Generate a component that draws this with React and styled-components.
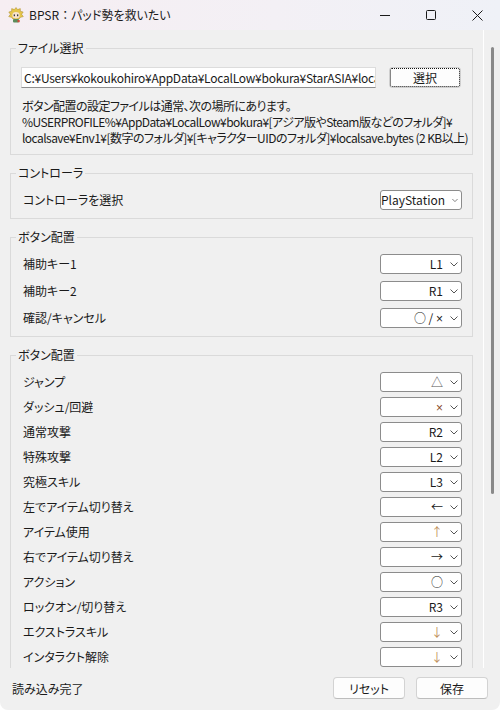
import React from "react";
import styled, { createGlobalStyle } from "styled-components";

const GlobalStyle = createGlobalStyle`
  html, body { margin: 0; padding: 0; background: #ffffff; }
  body {
    font-family: "Noto Sans CJK JP", "Noto Sans", sans-serif;
    font-size: 12px;
    color: #1a1a1a;
  }
  * { box-sizing: border-box; }
`;

const Window = styled.div`
  width: 500px;
  height: 710px;
  display: flex;
  flex-direction: column;
  background: #f0f0f0;
  border-radius: 0 0 8px 8px;
  overflow: hidden;
  font-feature-settings: "palt";
`;

const TitleBar = styled.div`
  height: 30px;
  flex: none;
  display: flex;
  align-items: center;
  background: linear-gradient(90deg, #f6eef2 0%, #f3f0f5 55%, #eff1f7 100%);
`;

const AppIcon = styled.svg`
  width: 16px;
  height: 16px;
  margin-left: 8px;
  flex: none;
`;

const TitleText = styled.div`
  margin-left: 5px;
  flex: 1;
  font-size: 12px;
  line-height: 16px;
  color: #1a1a1a;
`;

const FullWidth = styled.span`
  font-feature-settings: normal;
`;

const WinControls = styled.div`
  display: flex;
  height: 100%;
`;

const WinButton = styled.div`
  width: 46px;
  height: 30px;
  display: flex;
  align-items: center;
  justify-content: center;
`;

const Main = styled.div`
  height: 638px;
  flex: none;
  display: flex;
`;

const Content = styled.div`
  width: 483px;
  flex: none;
  overflow: hidden;
  padding: 18px 10px 0 10px;
  display: flex;
  flex-direction: column;
  gap: 18px;
`;

const ScrollTrack = styled.div`
  width: 17px;
  flex: none;
  border-left: 1px solid #ffffff;
  padding: 17px 0 0 7px;
`;

const ScrollThumb = styled.div`
  width: 3px;
  height: 447px;
  border-radius: 2px;
  background: #8a8a8a;
`;

const Group = styled.section`
  position: relative;
  flex: none;
  border: 1px solid #dadada;
  padding: ${(p) => p.$pt}px 10px 8px 10px;
`;

const Legend = styled.div`
  position: absolute;
  top: -8px;
  left: 5px;
  padding: 0 2px;
  background: #f0f0f0;
  font-size: 12px;
  line-height: 14px;
  color: #1a1a1a;
`;

const FileRow = styled.div`
  display: flex;
  align-items: center;
  gap: 13px;
  height: 21px;
`;

const TextBox = styled.div`
  width: 355px;
  height: 21px;
  background: #ffffff;
  border: 1px solid #dcdcdc;
  border-bottom-color: #8f8f8f;
  padding: 0 0 0 2px;
  overflow: hidden;
  white-space: nowrap;
  text-overflow: clip;
  line-height: 19px;
  font-size: 12px;
  letter-spacing: -0.25px;
`;

const SelectButton = styled.div`
  width: 72px;
  height: 21px;
  flex: none;
  border: 1px solid #cfcfcf;
  border-radius: 3px;
  background: #fdfdfd;
  outline: 1px dotted #111;
  outline-offset: -2px;
  display: flex;
  align-items: center;
  justify-content: center;
  font-size: 12px;
`;

const Description = styled.div`
  margin-top: 10px;
  padding-left: 1px;
  line-height: 16px;
  white-space: nowrap;
  font-size: 12px;
  letter-spacing: -0.55px;
`;

const Rows = styled.div`
  display: flex;
  flex-direction: column;
  gap: ${(p) => p.$gap}px;
`;

const Row = styled.div`
  display: flex;
  align-items: center;
  justify-content: space-between;
  height: 20px;
`;

const Label = styled.div`
  padding-left: 2px;
  font-size: 12px;
  line-height: 16px;
`;

const Combo = styled.div`
  width: 82px;
  height: 20px;
  border: 1px solid #8c8c8c;
  border-radius: 3px;
  background: #ffffff;
  display: flex;
  align-items: center;
  justify-content: flex-end;
  gap: 7px;
  padding-right: 3px;
`;

const ComboValue = styled.span`
  font-size: 12px;
  line-height: 16px;
  color: ${(p) => p.$color || "#1a1a1a"};
  white-space: nowrap;
`;

const SmallCross = styled.span`
  font-family: "Liberation Sans", "DejaVu Sans", sans-serif;
  font-size: 12px;
  color: ${(p) => p.$color || "#1a1a1a"};
`;

const StatusBar = styled.div`
  flex: 1;
  display: flex;
  align-items: center;
  gap: 11px;
  padding: 0 12px 2px 12px;
`;

const StatusText = styled.div`
  flex: 1;
  font-size: 12px;
`;

const PushButton = styled.button`
  width: 72px;
  height: 22px;
  padding: 0;
  border: 1px solid #d3d3d3;
  border-bottom-color: #bdbdbd;
  border-radius: 4px;
  background: #fdfdfd;
  font-family: inherit;
  font-size: 12px;
  color: #1a1a1a;
  font-feature-settings: "palt";
`;

const Chevron = () => (
  <svg width="8" height="5" viewBox="0 0 8 5">
    <polyline points="0.5,0.5 4,4 7.5,0.5" fill="none" stroke="#555555" strokeWidth="1" />
  </svg>
);

const Select = ({ value, color }) => (
  <Combo>
    <ComboValue $color={color}>{value}</ComboValue>
    <Chevron />
  </Combo>
);

const assistRows = [
  ["補助キー1", "L1"],
  ["補助キー2", "R1"],
  ["確認/キャンセル", <>○ / <SmallCross>×</SmallCross></>],
];

const buttonRows = [
  ["ジャンプ", "△", "#555"],
  ["ダッシュ/回避", <SmallCross $color="#8a4a2a">×</SmallCross>],
  ["通常攻撃", "R2"],
  ["特殊攻撃", "L2"],
  ["究極スキル", "L3"],
  ["左でアイテム切り替え", "←"],
  ["アイテム使用", "↑", "#c0905c"],
  ["右でアイテム切り替え", "→"],
  ["アクション", "○"],
  ["ロックオン/切り替え", "R3"],
  ["エクストラスキル", "↓", "#c0905c"],
  ["インタラクト解除", "↓", "#c0905c"],
];

export default function App() {
  return (
    <>
      <GlobalStyle />
      <Window>
        <TitleBar>
          <AppIcon viewBox="0 0 16 16">
            <polygon
              points="8,0.5 9.6,2.6 12.3,1.6 12.4,4.3 15.2,5 13.6,7.3 15.3,9.6 12.6,10.3 11,12 5,12 3.4,10.3 0.7,9.6 2.4,7.3 0.8,5 3.6,4.3 3.7,1.6 6.4,2.6"
              fill="#e6c64a"
              stroke="#a88a2a"
              strokeWidth="0.5"
            />
            <ellipse cx="8" cy="8.3" rx="3.6" ry="3.2" fill="#f7e3cf" />
            <rect x="5.7" y="7.4" width="1.3" height="1.8" fill="#3a3a3a" />
            <rect x="9" y="7.4" width="1.3" height="1.8" fill="#3a3a3a" />
            <rect x="5" y="12" width="6" height="3.5" rx="1" fill="#5c8c5a" />
            <rect x="9.5" y="13" width="2.2" height="2.2" fill="#d24a3a" />
          </AppIcon>
          <TitleText>
            BPSR<FullWidth>：</FullWidth>パッド勢を救いたい
          </TitleText>
          <WinControls>
            <WinButton>
              <svg width="10" height="10" viewBox="0 0 10 10">
                <line x1="0" y1="5.5" x2="10" y2="5.5" stroke="#1a1a1a" strokeWidth="1" />
              </svg>
            </WinButton>
            <WinButton>
              <svg width="10" height="10" viewBox="0 0 10 10">
                <rect x="0.5" y="0.5" width="9" height="9" rx="1" fill="none" stroke="#1a1a1a" strokeWidth="1" />
              </svg>
            </WinButton>
            <WinButton>
              <svg width="11" height="11" viewBox="0 0 11 11">
                <line x1="0.5" y1="0.5" x2="10.5" y2="10.5" stroke="#1a1a1a" strokeWidth="1" />
                <line x1="10.5" y1="0.5" x2="0.5" y2="10.5" stroke="#1a1a1a" strokeWidth="1" />
              </svg>
            </WinButton>
          </WinControls>
        </TitleBar>

        <Main>
          <Content>
            <Group $pt={18}>
              <Legend>ファイル選択</Legend>
              <FileRow>
                <TextBox>C:¥Users¥kokoukohiro¥AppData¥LocalLow¥bokura¥StarASIA¥local</TextBox>
                <SelectButton>選択</SelectButton>
              </FileRow>
              <Description>
                ボタン配置の設定ファイルは通常、次の場所にあります。
                <br />
                %USERPROFILE%¥AppData¥LocalLow¥bokura¥[アジア版やSteam版などのフォルダ]¥
                <br />
                localsave¥Env1¥[数字のフォルダ]¥[キャラクターUIDのフォルダ]¥localsave.bytes (2 KB以上)
              </Description>
            </Group>

            <Group $pt={16}>
              <Legend>コントローラ</Legend>
              <Row>
                <Label>コントローラを選択</Label>
                <Select value="PlayStation" />
              </Row>
            </Group>

            <Group $pt={16}>
              <Legend>ボタン配置</Legend>
              <Rows $gap={7}>
                {assistRows.map(([label, value]) => (
                  <Row key={label}>
                    <Label>{label}</Label>
                    <Select value={value} />
                  </Row>
                ))}
              </Rows>
            </Group>

            <Group $pt={16}>
              <Legend>ボタン配置</Legend>
              <Rows $gap={5}>
                {buttonRows.map(([label, value, color]) => (
                  <Row key={label}>
                    <Label>{label}</Label>
                    <Select value={value} color={color} />
                  </Row>
                ))}
              </Rows>
            </Group>
          </Content>
          <ScrollTrack>
            <ScrollThumb />
          </ScrollTrack>
        </Main>

        <StatusBar>
          <StatusText>読み込み完了</StatusText>
          <PushButton>リセット</PushButton>
          <PushButton>保存</PushButton>
        </StatusBar>
      </Window>
    </>
  );
}
